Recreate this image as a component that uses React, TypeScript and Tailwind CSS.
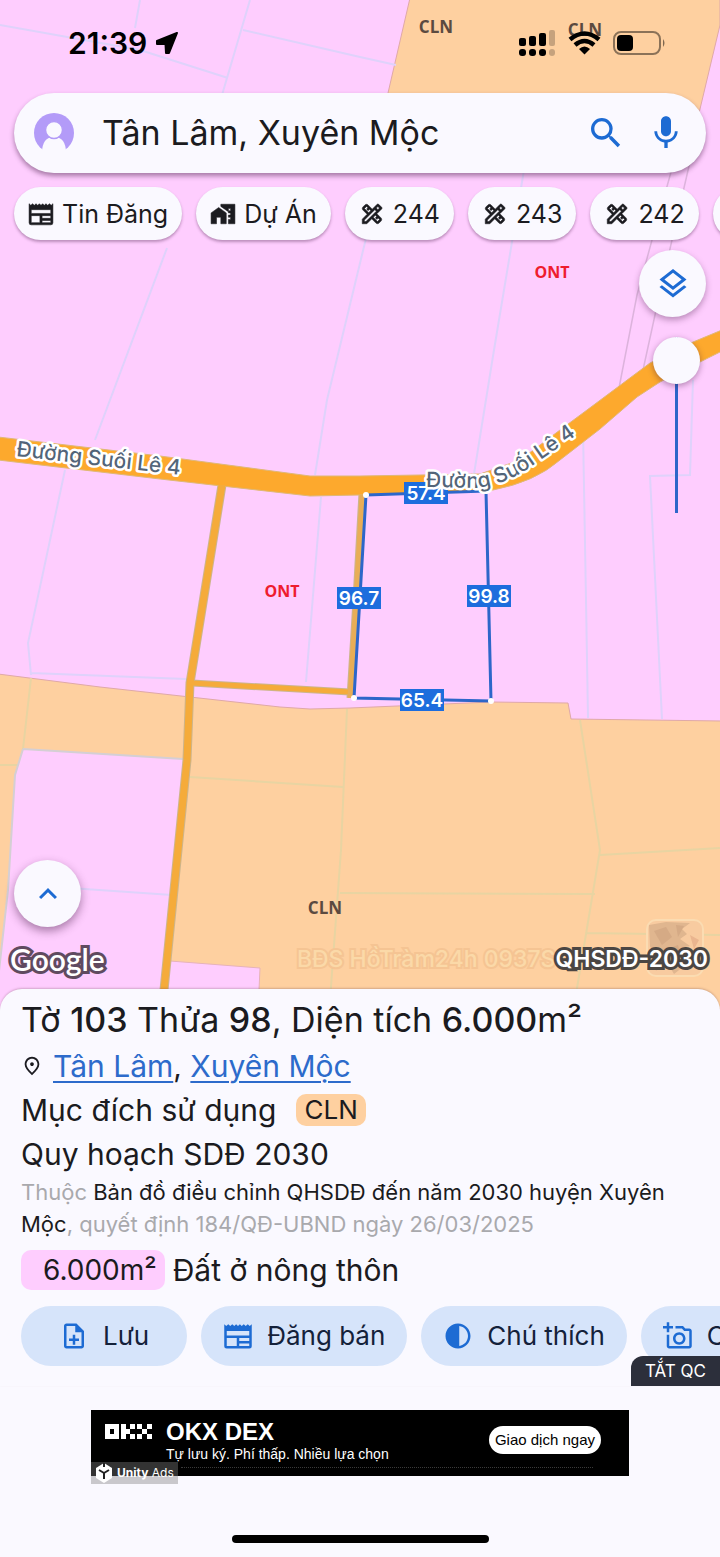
import React, { useState } from 'react';
import {
  MdContrast,
  MdExpandLess,
  MdHomeWork,
  MdMic,
  MdOutlineAddAPhoto,
  MdOutlineDesignServices,
  MdOutlineLayers,
  MdOutlineNoteAdd,
  MdOutlinePlace,
  MdSearch,
} from 'react-icons/md';

interface IconProps { className?: string; }
interface Item { label: string; icon: React.ComponentType<IconProps>; }

function NewsIcon({ className }: IconProps) {
  return (
    <svg className={className} viewBox="0 0 24 24" fill="currentColor">
      <path
        fillRule="evenodd"
        d="M1 2.500 L2.600 4 L4.200 2.500 L5.800 4 L7.400 2.500 L9 4 L10.500 2.500 L12 4 L13.500 2.500 L15 4 L16.600 2.500 L18.200 4 L19.800 2.500 L21.400 4 L23 2.500 V20 Q23 22 21 22 H3 Q1 22 1 20 Z M3 8 V11.500 H21 V8 Z M3 13.500 V20 H11 V13.500 Z M13 13.500 V16 H21 V13.500 Z M13 18 V20 H21 V18 Z"
      />
    </svg>
  );
}

const filters: Item[] = [
  { label: 'Tin Đăng', icon: NewsIcon },
  { label: 'Dự Án', icon: MdHomeWork },
  { label: '244', icon: MdOutlineDesignServices },
  { label: '243', icon: MdOutlineDesignServices },
  { label: '242', icon: MdOutlineDesignServices },
  { label: '241', icon: MdOutlineDesignServices },
];

const edges = [
  { label: '57.4', x: 426, y: 493 },
  { label: '96.7', x: 359, y: 598 },
  { label: '99.8', x: 489, y: 596 },
  { label: '65.4', x: 422, y: 700 },
];

const corners = [[366, 495], [486, 491], [491, 701], [354, 698]];

function StatusBar() {
  return (
    <div className="flex h-[93px] items-center justify-between pl-[68px] pr-[54px] pb-2 text-black">
      <div className="flex items-center gap-2">
        <span className="text-[30px] font-semibold leading-9">21:39</span>
        <svg width="24" height="24" viewBox="0 0 24 24" stroke="black" strokeWidth="2" strokeLinejoin="round">
          <path d="M22 2 L2 10 L2 13 L10.500 13 L11 22 L14 22 Z" />
        </svg>
      </div>
      <div className="flex items-center gap-3">
        {/* dual sim signal */}
        <svg width="37" height="26" viewBox="0 0 37 26">
          <rect x="0" y="8" width="7" height="8" rx="2" />
          <rect x="10" y="6" width="7" height="10" rx="2" />
          <rect x="20" y="3" width="7" height="13" rx="2" />
          <rect x="30" y="0" width="6" height="16" rx="2" opacity=".22" />
          <rect x="0" y="19" width="7" height="7" rx="3" />
          <rect x="10" y="19" width="7" height="7" rx="3" />
          <rect x="20" y="19" width="7" height="7" rx="3" />
          <rect x="30" y="19" width="6" height="7" rx="3" opacity=".22" />
        </svg>
        <svg width="33" height="24" viewBox="0 0 33 24" fill="none" stroke="black" strokeWidth="4.500">
          <path d="M2 8.500 Q16.500 -3.500 31 8.500" />
          <path d="M7 14 Q16.500 6 26 14" />
          <path d="M11 18 Q16.500 13 22 18 L16.500 23.500 Z" fill="black" stroke="none" />
        </svg>
        <svg width="53" height="24" viewBox="0 0 53 24">
          <rect x="1" y="1" width="46" height="22" rx="7" fill="none" stroke="#000" strokeOpacity=".45" strokeWidth="2" />
          <rect x="4" y="4" width="16" height="16" rx="4" />
          <path d="M50 8 Q53 12 50 16 Z" opacity=".5" />
        </svg>
      </div>
    </div>
  );
}

function ParcelMap() {
  return (
    <svg
      className="absolute inset-0 size-full"
      viewBox="0 0 720 1010"
      preserveAspectRatio="xMidYMin slice"
      fontFamily="Inter, sans-serif"
    >
      <rect width="720" height="1010" fill="#fecdfe" />

      {/* land use zones */}
      <g fill="#fed0a0" stroke="#dfa9a8">
        <path d="M410 -2 L388 93 L380 130 H695 L720 25 V-2 Z" />
        <path d="M-2 674 L100 687 L190 697 L280 707 L310 709 L350 708 L491 702 L568 703 L571 719 L722 721 V1012 H-2 Z" />
      </g>
      <path d="M23 749 L183 759 L163 1012 H-2 V980 L8 890 L15 775 Z" fill="#fecdfe" />
      <path d="M170 961 L260 968 L258 1012 H163 Z" fill="#fecdfe" stroke="#e6b3b9" />

      {/* parcel borders */}
      <g fill="none" stroke="#dfd2fb" strokeWidth="2">
        <path d="M0 25 L140 50 L228 78 M140 0 L135 28 M250 0 L222 95 M243 30 L360 57 L396 65" />
        <path d="M167 248 L95 440 M65 470 L28 643 L31 675 M31 673 L186 679" />
        <path d="M368 230 L327 400 L315 475 M321 497 L306 682" />
        <path d="M524 170 L494 350 L474 474" />
        <path d="M583 430 L586 600 L588 718 M693 380 L690 475 L650 476 L662 719" />
        <path d="M70 888 L172 895" />
      </g>
      <g fill="none" stroke="#e8d4a2" strokeWidth="2">
        <path d="M31 678 L23 749 M0 765 L18 765 M190 777 L343 787 M347 709 L341 850 L330 1000" />
        <path d="M580 720 L600 850 L575 1000 M600 855 L720 848 M340 893 L595 894 M587 933 L720 935" />
      </g>
      <path d="M23 749 L183 759 M23 749 L15 775 L8 890 L-2 980" fill="none" stroke="#d5cfd4" strokeWidth="2" />
      <path d="M680 140 L652 240 L637 295 L619 388 M695 140 L672 240 L655 315 L643 370" fill="none" stroke="#dcb3dc" strokeWidth="1.500" />

      {/* roads */}
      <g fill="none" stroke="#cdb58c" strokeLinejoin="round">
        <path d="M222 485 L190 683 L187 760 L163 1000" strokeWidth="9" />
        <path d="M192 683 L350 692" strokeWidth="7" />
        <path d="M362 493 L356 600 L350 698" strokeWidth="7" />
      </g>
      <path
        d="M-2 437 L160 456 L310 476 L360 476 L480 474 L520 460 L560 430 L587 410 L650 363 L693 342 L722 330 V351 L660 382 L637 397 L600 429 L560 460 Q535 482 493 490 L430 493 L360 495 L310 496 L160 479 L-2 460 Z"
        fill="#fda92d"
        stroke="#dfb878"
      />
      <g fill="none" stroke="#f5ab3a" strokeLinejoin="round">
        <path d="M222 485 L190 683 L187 760 L163 1000" strokeWidth="7" />
        <path d="M192 683 L350 692" strokeWidth="5" />
        <path d="M362 495 L356 600 L350 698" stroke="#e8ad56" strokeWidth="5" />
      </g>

      {/* selected parcel */}
      <path d="M366 495 L486 491 L491 701 L354 698 Z" fill="none" stroke="#2d66c9" strokeWidth="3" />
      {corners.map(([x, y]) => (
        <circle key={`${x}-${y}`} cx={x} cy={y} r="3" fill="white" />
      ))}
      {edges.map((edge) => (
        <g key={edge.label}>
          <rect x={edge.x - 22} y={edge.y - 11} width="44" height="22" fill="#1d6ddd" />
          <text x={edge.x} y={edge.y + 7} textAnchor="middle" fontSize="19" fontWeight="600" fill="white">{edge.label}</text>
        </g>
      ))}

      {/* zone codes */}
      <g fontFamily="'Open Sans', sans-serif" fontWeight="700" textAnchor="middle">
        <g fill="#5b4a40" fontSize="17">
          <text x="436" y="33">CLN</text>
          <text x="585" y="36">CLN</text>
          <text x="325" y="914">CLN</text>
        </g>
        <g fill="#ee1c2e" fontSize="16">
          <text x="552" y="278">ONT</text>
          <text x="282" y="597">ONT</text>
        </g>
      </g>

      {/* road names */}
      <defs>
        <path id="road-west" d="M16 456 L216 479" />
        <path id="road-east" d="M426 487 L480 488 Q504 484 526 470 L610 412" />
      </defs>
      <g fontSize="21" fontWeight="500" fill="#536579" stroke="white" strokeWidth="5" strokeLinejoin="round" paintOrder="stroke">
        <text><textPath href="#road-west">Đường Suối Lê 4</textPath></text>
        <text><textPath href="#road-east">Đường Suối Lê 4</textPath></text>
      </g>
    </svg>
  );
}

function SearchBar() {
  const [query, setQuery] = useState('Tân Lâm, Xuyên Mộc');

  return (
    <form
      onSubmit={(e) => e.preventDefault()}
      className="mx-3.5 flex h-20 items-center rounded-full bg-[#faf9ff] px-5 shadow-[0_3px_5px_rgba(60,20,60,0.45)]"
    >
      <button type="button" aria-label="Tài khoản" className="shrink-0">
        <svg width="40" height="40" viewBox="0 0 40 40">
          <circle cx="20" cy="20" r="20" fill="#b39bf8" />
          <path d="M8 40 Q8 24 20 24 Q32 24 32 40 Z" fill="#faf9ff" />
          <circle cx="20" cy="17" r="8.500" fill="#faf9ff" stroke="#b39bf8" strokeWidth="1.500" />
        </svg>
      </button>
      <input
        type="text"
        aria-label="Tìm kiếm"
        value={query}
        onChange={(e) => setQuery(e.target.value)}
        className="ml-7 min-w-0 flex-1 bg-transparent text-[34px] leading-10 text-[#1b1b20] outline-none"
      />
      <button type="submit" aria-label="Tìm" className="mr-5 text-[#1d6bd3]">
        <MdSearch className="size-10" />
      </button>
      <button type="button" aria-label="Giọng nói" className="text-[#1d6bd3]">
        <MdMic className="size-10" />
      </button>
    </form>
  );
}

function MapView() {
  const [opacity, setOpacity] = useState(0);

  return (
    <section className="relative flex flex-1 flex-col overflow-hidden pb-[18px]">
      <ParcelMap />
      <div className="relative flex flex-1 flex-col">
        <StatusBar />
        <SearchBar />

        <div className="flex gap-3.5 overflow-hidden pt-3.5 pb-2.5 pl-3.5">
          {filters.map(({ label, icon: Icon }) => (
            <button
              key={label}
              className="flex h-[53px] shrink-0 items-center gap-2 whitespace-nowrap rounded-full bg-[#faf9ff] px-3.5 text-[25px] leading-8 text-[#1b1b20] shadow-[0_2px_3px_rgba(60,20,60,0.35)]"
            >
              <Icon className="size-[26px] [&>path:not([fill=none])]:stroke-current [&>path:not([fill=none])]:[stroke-width:0.5px]" />
              {label}
            </button>
          ))}
        </div>

        <div className="flex flex-col items-end gap-5 pr-3.5">
          <button
            aria-label="Lớp bản đồ"
            className="flex size-[67px] items-center justify-center rounded-full bg-[#faf9ff] text-[#1d6bd3] shadow-[0_3px_6px_rgba(60,20,60,0.35)]"
          >
            <MdOutlineLayers className="size-9" />
          </button>
          <input
            type="range"
            aria-label="Độ mờ lớp quy hoạch"
            min={0}
            max={100}
            value={opacity}
            onChange={(e) => setOpacity(Number(e.target.value))}
            className="mr-1.5 h-[176px] w-12 appearance-none bg-transparent [writing-mode:vertical-lr] [&::-webkit-slider-runnable-track]:w-[3px] [&::-webkit-slider-runnable-track]:bg-[#2d66c9] [&::-webkit-slider-thumb]:-ml-[22px] [&::-webkit-slider-thumb]:size-[47px] [&::-webkit-slider-thumb]:appearance-none [&::-webkit-slider-thumb]:rounded-full [&::-webkit-slider-thumb]:bg-[#faf9ff] [&::-webkit-slider-thumb]:shadow-[0_2px_6px_rgba(60,20,60,0.4)]"
          />
        </div>

        <div className="mt-auto px-3.5">
          <button
            aria-label="Mở rộng"
            className="flex size-[67px] items-center justify-center rounded-full bg-[#faf9ff] text-[#1d6bd3] shadow-[0_4px_10px_rgba(60,20,60,0.45)]"
          >
            <MdExpandLess className="size-9" />
          </button>
        </div>

        <div className="flex h-16 items-center justify-between pl-2.5 pr-3">
          <span className="text-[30px] font-semibold leading-10 text-white [-webkit-text-stroke:6px_#604a60] [font-family:Lato,sans-serif] [paint-order:stroke_fill]">
            Google
          </span>
          <div className="relative flex items-center whitespace-nowrap">
            <span className="absolute right-full text-[23px] font-medium leading-8 text-[#fbd9a8] [-webkit-text-stroke:4px_#f5c493] [paint-order:stroke_fill]">
              BĐS HồTràm24h 0937S
            </span>
            {/* basemap thumbnail */}
            <svg className="absolute right-1 -bottom-0.5" width="58" height="58" viewBox="0 0 58 58">
              <rect x="1" y="1" width="56" height="56" rx="9" fill="#f8cba0" stroke="#fbdcb2" strokeWidth="2" />
              <path d="M3 6 L20 3 L44 4 L36 10 L41 15 L34 20 L44 27 L34 29 L42 44 L28 55 L18 38 L4 28 Z" fill="#e0b68f" />
              <path d="M8 12 L20 8 L26 18 L16 26 Z M30 6 L38 7 L32 18 Z M22 30 L32 26 L36 42 L26 48 Z" fill="#c99d7c" opacity=".5" />
              <path d="M44 16 L53 21 L48 30 Z M8 38 L16 44 L10 52 Z" fill="#eab58f" />
            </svg>
            <span className="relative text-[23px] font-semibold leading-8 text-white [-webkit-text-stroke:6px_#4b4643] [paint-order:stroke_fill]">
              QHSDĐ-2030
            </span>
          </div>
        </div>
      </div>
    </section>
  );
}

const actions: Item[] = [
  { label: 'Lưu', icon: MdOutlineNoteAdd },
  { label: 'Đăng bán', icon: NewsIcon },
  { label: 'Chú thích', icon: MdContrast },
  { label: 'Chụp ảnh', icon: MdOutlineAddAPhoto },
];

function ParcelSheet() {
  return (
    <section className="relative -mt-5 rounded-t-[22px] bg-[#faf9ff] pt-[11px] shadow-[0_-1px_2px_rgba(90,50,60,0.25)]">
      <div className="px-[21px]">
        <h1 className="text-[34px] leading-10">
          Tờ <b className="font-medium">103</b> Thửa <b className="font-medium">98</b>, Diện tích <b className="font-medium">6.000</b>m²
        </h1>
        <div className="mt-1 flex h-11 items-center text-[30px]">
          <MdOutlinePlace className="mr-2.5 size-[22px]" />
          <p>
            <a href="#tan-lam" className="text-[#2d6bcb] underline decoration-2 underline-offset-4">Tân Lâm</a>,{' '}
            <a href="#xuyen-moc" className="text-[#2d6bcb] underline decoration-2 underline-offset-4">Xuyên Mộc</a>
          </p>
        </div>
        <div className="flex h-11 items-center gap-5 text-[30px]">
          <span>Mục đích sử dụng</span>
          <span className="rounded-[10px] bg-[#fed0a0] px-2 text-[26px] leading-8">CLN</span>
        </div>
        <h2 className="text-[30px] leading-[44px]">Quy hoạch SDĐ 2030</h2>
        <p className="text-[22px] leading-8 text-[#a9a9ad]">
          Thuộc <span className="text-[#1b1b20]">Bản đồ điều chỉnh QHSDĐ đến năm 2030 huyện Xuyên Mộc</span>, quyết định 184/QĐ-UBND ngày 26/03/2025
        </p>
        <div className="mt-2.5 flex h-10 items-center gap-2 text-[30px]">
          <span className="rounded-[10px] bg-[#fecdfe] pl-[22px] pr-2 text-[28px] leading-10">6.000m²</span>
          <span>Đất ở nông thôn</span>
        </div>
      </div>

      <div className="relative mt-4 flex gap-3.5 overflow-hidden pl-[21px] pb-5">
        {actions.map(({ label, icon: Icon }, i) => (
          <button
            key={label}
            className={`flex h-[60px] shrink-0 items-center gap-3.5 whitespace-nowrap rounded-full bg-[#d6e4fa] text-[26px] leading-8 text-[#14213a] ${i === 0 ? 'px-[38px]' : 'px-[22px]'}`}
          >
            <Icon className="size-[30px] text-[#1d6bd3]" />
            {label}
          </button>
        ))}
        <button className="absolute right-0 bottom-0 h-[30px] rounded-tl-xl bg-[#2c2f3b] px-3.5 text-[17px] leading-[30px] text-white">
          TẮT QC
        </button>
      </div>
    </section>
  );
}

function AdBanner() {
  return (
    <aside className="mx-auto mt-6 w-3/4 max-w-[538px]">
      <div className="relative flex h-[66px] bg-black pl-3.5 pr-7 text-white">
        <svg className="mt-3.5 shrink-0" width="47" height="15" viewBox="0 0 47 15" fill="white">
          <path fillRule="evenodd" d="M0 0 H14 V15 H0 Z M5 5 V10 H9 V5 Z" />
          <path d="M16 0 H21 V5 H25 V10 H21 V15 H16 Z M25 0 H30 V5 H25 Z M25 10 H30 V15 H25 Z" />
          <path d="M32 0 H37 V5 H32 Z M42 0 H47 V5 H42 Z M37 5 H42 V10 H37 Z M32 10 H37 V15 H32 Z M42 10 H47 V15 H42 Z" />
        </svg>
        <div className="ml-3.5 flex-1 whitespace-nowrap pt-2 [font-family:'Liberation_Sans',sans-serif]">
          <p className="text-[24px] font-bold leading-7">OKX DEX</p>
          <p className="text-[14px] leading-4">Tự lưu ký. Phí thấp. Nhiều lựa chọn</p>
        </div>
        <button className="mt-4 h-7 whitespace-nowrap rounded-full bg-white px-1.5 text-[15px] leading-7 text-black [font-family:'Liberation_Sans',sans-serif]">
          Giao dịch ngay
        </button>
        <div className="absolute top-[57px] right-9 left-[90px] border-t border-dotted border-[#3a3a3a]" />
        <div className="absolute -bottom-2 left-0 flex h-[22px] items-center gap-1 whitespace-nowrap bg-[#808080]/40 px-1 text-[12px] leading-4">
          <svg width="18" height="20" viewBox="0 0 18 20">
            <path d="M9 0 L17 5 V15 L9 20 L1 15 V5 Z" fill="white" />
            <path d="M9 10 V16 M9 10 L4 7 M9 10 L14 7 M9 0 V4" stroke="#222" strokeWidth="2" />
          </svg>
          <span><b>Unity</b> Ads</span>
        </div>
      </div>
    </aside>
  );
}

export default function App() {
  return (
    <main className="flex min-h-screen flex-col overflow-hidden bg-[#faf9ff] text-[#1b1b20] [font-family:Inter,'Noto_Sans',sans-serif]">
      <MapView />
      <ParcelSheet />
      <AdBanner />
      <div className="mx-auto mt-[59px] mb-3.5 h-2 w-[257px] shrink-0 rounded-full bg-black" />
    </main>
  );
}
